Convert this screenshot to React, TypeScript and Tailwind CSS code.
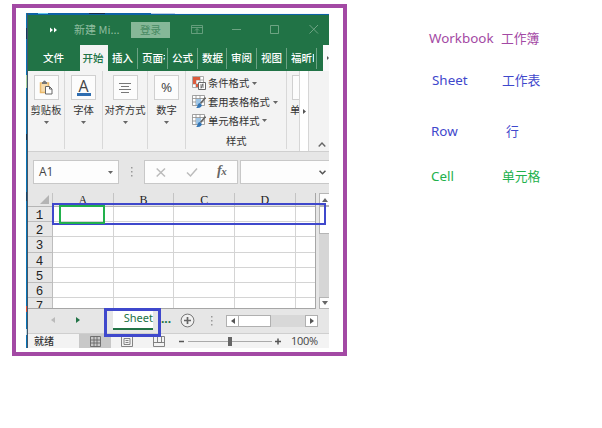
import React from 'react';

const CJK = "font-['Noto_Sans_CJK_SC',sans-serif]";

function Caret({ className = '' }: { className?: string }) {
  return (
    <svg className={`block shrink-0 ${className}`} width="5" height="3" viewBox="0 0 5 3">
      <path d="M0 0h5L2.5 3z" fill="#666" />
    </svg>
  );
}

function TitleBar() {
  return (
    <div className="flex h-[30px] items-center bg-[#217346] pb-[2px]">
      <svg className="ml-[22px] mt-[2px] block" width="7" height="6" viewBox="0 0 7 6">
        <path d="M0 .5 3 3 0 5.5zM4 .5 7 3 4 5.5z" fill="#fff" />
      </svg>
      <div className="ml-[17px] w-[57px] whitespace-pre text-[11px] leading-[16px] text-[#8fbd9f]">新建 Mi...</div>
      <div className="mt-px flex h-[16px] w-[39px] items-center justify-center bg-[#86b898] text-[10.5px] leading-[14px] text-[#468a62]">登录</div>
      <svg className="ml-[21px] block" width="128" height="11" viewBox="0 0 128 11" fill="none" stroke="#76a98a">
        <path d="M.5 1.5h11v8H.5zM.5 3.5h11M6 9V5M4 6.5l2-2 2 2" strokeWidth=".8" />
        <path d="M41 5.5h9M79.5 1.5h8v8h-8zM118.500 1l8.500 8.500M127 1l-8.500 8.500" strokeWidth=".9" />
      </svg>
    </div>
  );
}

function Tab({ label, width }: { label: string; width: number }) {
  return (
    <div className="flex h-[21px] shrink-0 items-center border-r border-[#6ba283] pl-[4px]" style={{ width }}>
      <span className="block w-[23px] overflow-hidden whitespace-nowrap">{label}</span>
    </div>
  );
}

function RibbonTabs() {
  return (
    <div className="flex h-[26px] items-center bg-[#217346] text-[10.5px] font-medium leading-[16px] text-white">
      <div className="w-[52px] pl-[15px]">文件</div>
      <div className="flex h-full w-[28px] items-center bg-[#f3f3f3] pl-[2.500px] text-[#217346]">开始</div>
      <Tab label="插入" width={30} />
      <Tab label="页面布" width={30} />
      <Tab label="公式" width={30} />
      <Tab label="数据" width={29} />
      <Tab label="审阅" width={30} />
      <Tab label="视图" width={30} />
      <Tab label="福昕P" width={30} />
      <div className="ml-auto flex h-full w-[6px] items-center bg-[#fafafa] pl-[4px]">
        <svg width="2" height="4" viewBox="0 0 2 4"><path d="M0 0l2 2-2 2z" fill="#555" /></svg>
      </div>
    </div>
  );
}

function Group({ label, width, children }: { label: string; width: number; children: React.ReactNode }) {
  return (
    <div className="flex h-[78px] shrink-0 flex-col items-center border-r border-[#d8d8d8] pt-[4px]" style={{ width }}>
      <div className="flex h-[25px] w-[25px] items-center justify-center border border-[#d0d0d0] bg-[#fcfcfc]">{children}</div>
      <div className="mt-[2px] whitespace-nowrap text-[10.300px] leading-[16px] text-[#333]">{label}</div>
      <Caret className="mt-[3px]" />
    </div>
  );
}

function StyleRow({ label, kind }: { label: string; kind: 'rules' | 'table' }) {
  return (
    <div className="flex h-[19px] items-center text-[10.300px] leading-[16px] text-[#333]">
      <svg className="mr-[2px] block" width="14" height="14" viewBox="0 0 14 14" fill="none">
        {kind === 'rules' ? (
          <>
            <path d="M.5 .5h11v11H.5zM.5 4h11M.5 8h11M4 .5v11M8 .5v11" fill="#fff" stroke="#999" strokeWidth=".8" />
            <path d="M1 1h7v3H1zM1 4h3v4H1zM4 8h3v3H4z" fill="#dc5b3d" />
            <path d="M6.500 6.500h7v7h-7z" fill="#fff" stroke="#666" />
            <path d="M8 9h4M8 11h4M11 7.500l-2 5" stroke="#555" strokeWidth=".8" />
          </>
        ) : (
          <>
            <path d="M.5 .5h12v10H.5zM.5 3.500h12M.5 7h12M4 .5v10M8 .5v10" fill="#fff" stroke="#8b8b8b" strokeWidth=".8" />
            <path d="M4 4h5v6H4z" fill="#9fc5e5" />
            <path d="M13.500 2.500 8.500 8.500" stroke="#666" strokeWidth="1.700" />
            <path d="M4 13c2-1 1-4 3.500-5L10 10c-1 3-3 3-6 3z" fill="#3375b5" />
          </>
        )}
      </svg>
      {label}
      <Caret className="ml-[3px]" />
    </div>
  );
}

function Ribbon() {
  return (
    <div className="flex h-[81px] border-b border-[#cfcfcf] bg-[#f3f3f3]">
      <Group label="剪贴板" width={37}>
        <svg width="14" height="15" viewBox="0 0 14 15" fill="none">
          <path d="M1.500 3h8v9.500h-8z" fill="#f6dcae" stroke="#eab96b" strokeWidth="1.500" />
          <path d="M3 4h5V2H7a1.500 1.500 0 0 0-3 0H3z" fill="#777" />
          <path d="M6.500 6.500h4l2.500 2.500v5H6.500z" fill="#fff" stroke="#666" />
          <path d="M10.500 6.500V9H13" stroke="#666" />
        </svg>
      </Group>
      <Group label="字体" width={38}>
        <div className="flex flex-col items-center">
          <span className="font-['Open_Sans',sans-serif] text-[16px] leading-[14px] text-[#444]">A</span>
          <span className="block h-[3px] w-[14px] bg-[#2e6db0]" />
        </div>
      </Group>
      <Group label="对齐方式" width={45}>
        <svg width="12" height="10" viewBox="0 0 12 10"><path d="M0 .5h12M2 3.500h8M0 6.500h12M2 9.500h8" stroke="#777" /></svg>
      </Group>
      <Group label="数字" width={38}>
        <span className="font-['Open_Sans',sans-serif] text-[13.500px] text-[#444]">%</span>
      </Group>
      <div className="flex h-[78px] w-[101px] shrink-0 flex-col border-r border-[#d8d8d8] pl-[6px] pt-[3px]">
        <StyleRow label="条件格式" kind="rules" />
        <StyleRow label="套用表格格式" kind="table" />
        <StyleRow label="单元格样式" kind="table" />
        <div className="mt-[3px] pl-[34px] text-[10.300px] leading-[16px] text-[#333]">样式</div>
      </div>
      <div className="w-[12px] shrink-0 overflow-hidden pl-[3px] pt-[4px]">
        <div className="ml-[2px] h-[25px] w-[25px] border border-[#d0d0d0] bg-[#fcfcfc]" />
        <div className="mt-[2px] text-[10.300px] leading-[16px] text-[#333]">单</div>
      </div>
      <div className="flex h-full w-[10px] shrink-0 items-center justify-center border-x border-[#d6d6d6] bg-white">
        <svg width="3" height="5" viewBox="0 0 3 5"><path d="M0 0l3 2.500L0 5z" fill="#555" /></svg>
      </div>
      <div className="flex flex-1 items-end justify-center pb-[4px] pl-[5px]">
        <svg width="8" height="5" viewBox="0 0 8 5" fill="none" stroke="#666" strokeWidth="1.400"><path d="M.7 4.500 4 1l3.300 3.500" /></svg>
      </div>
    </div>
  );
}

function FormulaBar() {
  return (
    <div className="flex h-[41px] bg-[#e6e6e6] pl-[5px] pt-[8px]">
      <div className="flex h-[24px] w-[86px] items-center justify-between border border-[#c8c8c8] bg-[#fdfdfd] pl-[5px] pr-[5px] font-['Open_Sans',sans-serif] text-[12px] text-[#444]">
        A1<Caret />
      </div>
      <svg className="ml-[12px] mt-[7px] block" width="2" height="10" viewBox="0 0 2 10"><path d="M0 0h1.500v1.500H0zM0 4h1.500v1.500H0zM0 8h1.500v1.500H0z" fill="#999" /></svg>
      <div className="ml-[11px] flex h-[24px] w-[94px] items-center border border-[#c8c8c8] bg-[#fdfdfd] pl-[11px]">
        <svg width="42" height="11" viewBox="0 0 42 11" fill="none" stroke="#bcbcbc" strokeWidth="1.500"><path d="M.7 1.500 9 9.500M9 1.500.7 9.500M31 5.500l3.500 3.500L41 1.500" /></svg>
        <span className="ml-[19px] pb-[2px] font-['Liberation_Serif',serif] text-[14px] font-bold italic leading-[16px] tracking-[-0.500px] text-[#666]">f<span className="text-[11px]">x</span></span>
      </div>
      <div className="ml-[2px] flex h-[24px] flex-1 items-center justify-end border-y border-l border-[#c8c8c8] bg-[#fdfdfd] pr-[3px]">
        <svg width="7" height="5" viewBox="0 0 7 5" fill="none" stroke="#555" strokeWidth="1.600"><path d="M.5.700l3 3 3-3" /></svg>
      </div>
    </div>
  );
}

function Grid() {
  return (
    <div className="flex h-[116px] overflow-hidden bg-[#e6e6e6]">
      <div className="w-[288px] shrink-0 overflow-hidden border-b border-r border-[#a6a6a6]">
        <div className="flex h-[14px] border-b border-[#b5b5b5] font-['Liberation_Serif',serif] text-[12px] leading-[15px] text-[#222]">
          <div className="flex w-[25px] items-end justify-end border-r border-[#c4c4c4] pb-[2px] pr-[3px]">
            <svg width="9" height="9" viewBox="0 0 9 9"><path d="M9 0v9H0z" fill="#b4b4b4" /></svg>
          </div>
          {['A', 'B', 'C', 'D'].map((c) => (
            <div key={c} className="w-[60.700px] border-r border-[#c4c4c4] text-center">{c}</div>
          ))}
        </div>
        {[1, 2, 3, 4, 5, 6, 7].map((n) => (
          <div key={n} className="flex h-[15.200px]">
            <div className="w-[25px] border-b border-r border-[#bdbdbd] pr-[1px] text-center font-['Liberation_Mono',monospace] text-[12.500px] leading-[19px] text-[#222]">{n}</div>
            {[0, 1, 2, 3].map((i) => (
              <div key={i} className="w-[60.700px] border-b border-r border-[#d4d4d4] bg-white" />
            ))}
            <div className="flex-1 border-b border-[#d4d4d4] bg-white" />
          </div>
        ))}
      </div>
      <div className="ml-[3px] flex w-[10px] flex-col bg-[#d6d6d6]">
        <div className="flex h-[13px] items-center justify-center border border-r-0 border-[#b5b5b5] bg-[#fdfdfd]">
          <svg width="6" height="4" viewBox="0 0 6 4"><path d="M3 0l3 4H0z" fill="#666" /></svg>
        </div>
        <div className="h-[28px] border border-r-0 border-[#b5b5b5] bg-white" />
        <div className="mt-auto flex h-[12px] items-center justify-center border border-r-0 border-[#b5b5b5] bg-[#fdfdfd]">
          <svg width="6" height="4" viewBox="0 0 6 4"><path d="M0 0h6L3 4z" fill="#666" /></svg>
        </div>
      </div>
    </div>
  );
}

function SheetTabs() {
  return (
    <div className="flex h-[24px] bg-[#e6e6e6]">
      <svg className="ml-[23px] mt-[8px] block" width="29" height="7" viewBox="0 0 29 7"><path d="M4 0v6L0 3z" fill="#bbb" /><path d="M25 0v6l4-3z" fill="#217346" /></svg>
      <div className="ml-[33px] flex h-[21px] w-[40px] items-center justify-end border-b-2 border-[#217346] bg-white font-['Noto_Sans',sans-serif] text-[11px] text-[#217346]">Sheet</div>
      <div className="ml-[8px] w-[19px] font-['Noto_Sans',sans-serif] text-[12px] font-bold leading-[20px] text-[#217346]">...</div>
      <svg className="mt-[4px] block" width="15" height="15" viewBox="0 0 15 15" fill="none" stroke="#777"><circle cx="7.500" cy="7.500" r="6.400" fill="#f0f0f0" /><path d="M4 7.500h7M7.500 4v7" stroke="#666" strokeWidth="1.700" /></svg>
      <svg className="ml-[16px] mt-[7px] block" width="2" height="10" viewBox="0 0 2 10"><path d="M0 0h1.500v1.500H0zM0 4h1.500v1.500H0zM0 8h1.500v1.500H0z" fill="#999" /></svg>
      <div className="ml-[13px] mt-[6px] flex h-[12px] w-[92px] bg-[#d8d8d8]">
        <div className="flex w-[13px] items-center justify-center border border-[#b0b0b0] bg-white"><svg width="4" height="6" viewBox="0 0 4 6"><path d="M4 0v6L0 3z" fill="#555" /></svg></div>
        <div className="w-[32px] border border-l-0 border-[#b0b0b0] bg-white" />
        <div className="ml-auto flex w-[13px] items-center justify-center border border-[#b0b0b0] bg-white"><svg width="4" height="6" viewBox="0 0 4 6"><path d="M0 0v6l4-3z" fill="#555" /></svg></div>
      </div>
    </div>
  );
}

function StatusBar() {
  return (
    <div className="flex h-[15px] items-center border-t border-[#cfcfcf] bg-[#f3f3f3] text-[10px] leading-[14px] text-[#333]">
      <div className="w-[51px] pl-[6px] font-medium">就绪</div>
      <div className="flex h-full w-[32px] items-center justify-center bg-[#c8c8c8]">
        <svg width="11" height="11" viewBox="0 0 11 11" fill="none" stroke="#666"><path d="M.5.500h10v10H.5zM.5 4h10M.5 7h10M4 .5v10M7 .5v10" strokeWidth=".9" /></svg>
      </div>
      <svg className="ml-[10px] block" width="44" height="11" viewBox="0 0 44 11" fill="none" stroke="#777"><path d="M.5.500h11v10H.5zM3 2.500h6v6H3zM4.500 4.500h3M4.500 6.500h3M32.500.500h11v10h-11zM36.500.500v6h4v-6M32.500 6.500h11" strokeWidth=".9" /></svg>
      <svg className="ml-[14px] block" width="102" height="11" viewBox="0 0 102 11" fill="none"><path d="M0 5.500h5M96 5.500h6M99 2.500v6" stroke="#555" strokeWidth="1.500" /><path d="M9 5.500h84" stroke="#aaa" /><path d="M49 1h4v9h-4z" fill="#666" /></svg>
      <span className="ml-[10px] font-['Open_Sans',sans-serif] text-[11px] tracking-[-0.300px] text-[#444]">100%</span>
    </div>
  );
}

const legend = [
  { en: 'Workbook', zh: '工作簿', row: 'h-[42px] pl-[429px] text-[#a349a4]', gap: 'w-[72px]' },
  { en: 'Sheet', zh: '工作表', row: 'h-[51px] pl-[432px] text-[#3f48cc]', gap: 'w-[70px]' },
  { en: 'Row', zh: '行', row: 'h-[45px] pl-[431px] text-[#3f48cc]', gap: 'w-[75px]' },
  { en: 'Cell', zh: '单元格', row: 'h-[20px] pl-[431px] text-[#22b14c]', gap: 'w-[71px]' },
];

export default function App() {
  return (
    <div className={`relative flex h-[428px] w-[602px] overflow-hidden bg-white ${CJK}`}>
      <div className="ml-[12px] mt-[4px] h-[352px] w-[335px] shrink-0 border-[4px] border-[#a349a4] pl-[10px] pt-[5px]">
        <div className="flex h-[335px] w-[303px] overflow-hidden">
          <div className="flex w-[2px] shrink-0 flex-col border-r border-[#456] bg-[#0873b5]">
            <div className="mt-[15px] h-[11px] bg-[#123b60]" />
            <div className="mt-[36px] h-[13px] bg-[#a5d2a0]" />
            <div className="mt-[46px] h-[6px] bg-[#153650]" />
            <div className="mt-[52px] h-[9px] bg-[#18466b]" />
            <div className="mt-[105px] h-[6px] bg-[#d84c35]" />
            <div className="mt-[17px] h-[6px] bg-[#bdd8e5]" />
          </div>
          <div className="flex w-[301px] flex-col">
            <div className="flex h-[2px] bg-[#0d62a6]">
              <div className="ml-[10px] h-px w-[10px] bg-[#62c7ed]" />
              <div className="ml-[41px] h-px w-[16px] bg-[#112e50]" />
              <div className="ml-[46px] h-px w-[24px] bg-[#b9cce5]" />
              <div className="h-px flex-1 bg-[#f4f8fc]" />
            </div>
            <TitleBar />
            <RibbonTabs />
            <Ribbon />
            <FormulaBar />
            <Grid />
            <SheetTabs />
            <StatusBar />
          </div>
        </div>
      </div>
      <div className="-ml-[347px] pt-[28px] font-['Noto_Sans','Noto_Sans_CJK_SC',sans-serif] leading-[20px]">
        {legend.map((l) => (
          <div key={l.en} className={`flex ${l.row}`}>
            <span className={`shrink-0 text-[13.400px] ${l.gap}`}>{l.en}</span>
            <span className="whitespace-nowrap text-[12.800px]">{l.zh}</span>
          </div>
        ))}
      </div>
      <div className="absolute left-[52px] top-[203px] h-[22px] w-[274px] border-2 border-[#3f48cc]" />
      <div className="absolute left-[59px] top-[205px] h-[19px] w-[46px] border-2 border-[#22b14c]" />
      <div className="absolute left-[104px] top-[308px] h-[29px] w-[57px] border-[3px] border-[#3f48cc]" />
    </div>
  );
}
